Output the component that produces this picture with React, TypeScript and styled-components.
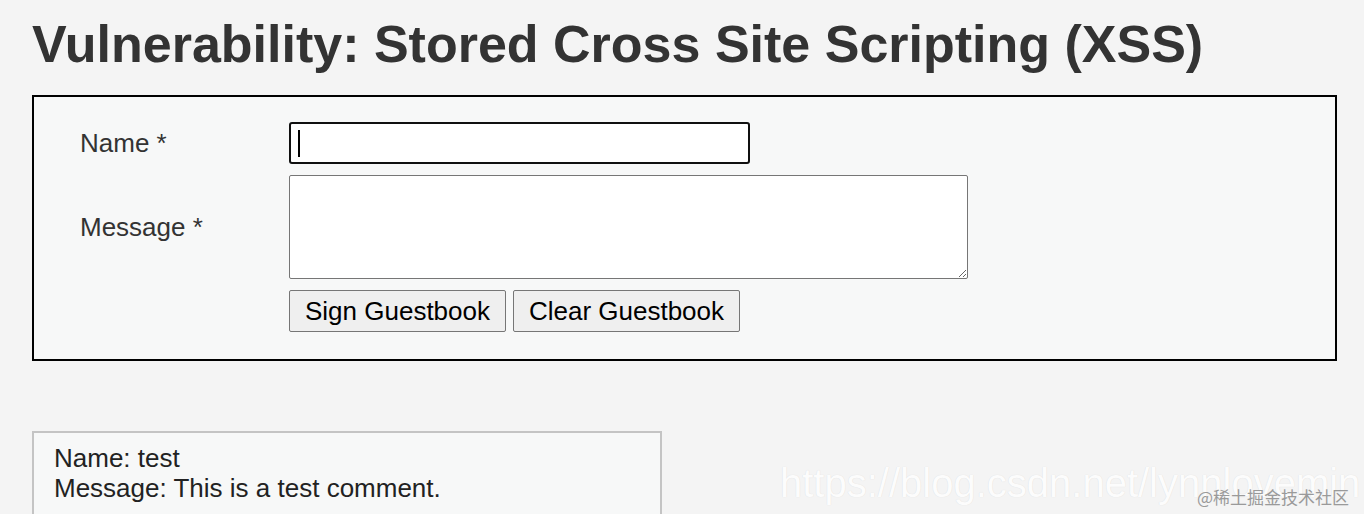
import React from "react";
import styled, { createGlobalStyle } from "styled-components";

const GlobalStyle = createGlobalStyle`
  html, body {
    margin: 0;
    padding: 0;
    background: #f4f4f4;
    overflow: hidden;
  }
  body {
    font-family: "Liberation Sans", Arial, sans-serif;
  }
`;

const Page = styled.div`
  position: relative;
  height: 514px;
  padding: 14px 27px 0 32px;
  box-sizing: border-box;
  overflow: hidden;
`;

const Title = styled.h1`
  margin: 0 0 21px 0;
  font-size: 52px;
  line-height: 60px;
  font-weight: bold;
  color: #333333;
  white-space: nowrap;
`;

const FormBox = styled.div`
  border: 2px solid #000;
  background: #f7f8f8;
  padding: 25px 46px 27px 46px;
`;

const FormGrid = styled.div`
  display: grid;
  grid-template-columns: 209px auto;
  row-gap: 11px;
  align-items: center;
  justify-items: start;
`;

const Label = styled.div`
  font-size: 26px;
  color: #333333;
`;

const InputWrap = styled.div`
  position: relative;
`;

const TextInput = styled.input`
  display: block;
  box-sizing: border-box;
  width: 461px;
  height: 42px;
  border: 2px solid #101010;
  border-radius: 3px;
  background: #fff;
  outline: none;
  font-size: 26px;
  padding: 0 8px;
  margin: 0;
`;

const Caret = styled.span`
  position: absolute;
  left: 9px;
  top: 8px;
  width: 2px;
  height: 27px;
  background: #000;
`;

const MessageArea = styled.textarea`
  display: block;
  box-sizing: border-box;
  width: 679px;
  height: 104px;
  border: 1px solid #767676;
  border-radius: 2px;
  background: #fff;
  margin: 0;
  font-size: 26px;
  outline: none;
`;

const Buttons = styled.div`
  display: flex;
  gap: 7px;
`;

const Button = styled.button<{ $w: number }>`
  box-sizing: border-box;
  width: ${(p) => p.$w}px;
  height: 42px;
  font-family: "Liberation Sans", Arial, sans-serif;
  font-size: 26px;
  color: #000;
  background: #efefef;
  border: 1px solid #767676;
  border-radius: 2px;
  padding: 0;
  margin: 0;
`;

const Comment = styled.div`
  margin-top: 70px;
  width: 630px;
  box-sizing: border-box;
  border: 2px solid #c4c4c4;
  background: #f7f8f8;
  padding: 10px 20px 40px 20px;
  font-size: 26px;
  line-height: 30px;
  color: #222;
`;

const Watermark = styled.div`
  position: absolute;
  left: 780px;
  top: 460px;
  font-family: "Liberation Sans", Arial, sans-serif;
  font-size: 40px;
  line-height: 46px;
  color: rgba(255, 255, 255, 0.95);
  text-shadow: 0 0 1px rgba(0, 0, 0, 0.12);
  white-space: nowrap;
`;

const Credit = styled.div`
  position: absolute;
  left: 1197px;
  top: 486px;
  font-family: "Noto Sans CJK SC", sans-serif;
  font-size: 17px;
  line-height: 22px;
  color: #9a9a9a;
  white-space: nowrap;
`;

export default function App() {
  return (
    <>
      <GlobalStyle />
      <Page>
        <Title>Vulnerability: Stored Cross Site Scripting (XSS)</Title>
        <FormBox>
          <FormGrid>
            <Label>Name *</Label>
            <InputWrap>
              <TextInput type="text" />
              <Caret />
            </InputWrap>
            <Label>Message *</Label>
            <MessageArea />
            <span />
            <Buttons>
              <Button $w={217}>Sign Guestbook</Button>
              <Button $w={227}>Clear Guestbook</Button>
            </Buttons>
          </FormGrid>
        </FormBox>
        <Comment>
          Name: test
          <br />
          Message: This is a test comment.
        </Comment>
        <Watermark>https://blog.csdn.net/lynnlovemin</Watermark>
        <Credit>@稀土掘金技术社区</Credit>
      </Page>
    </>
  );
}
